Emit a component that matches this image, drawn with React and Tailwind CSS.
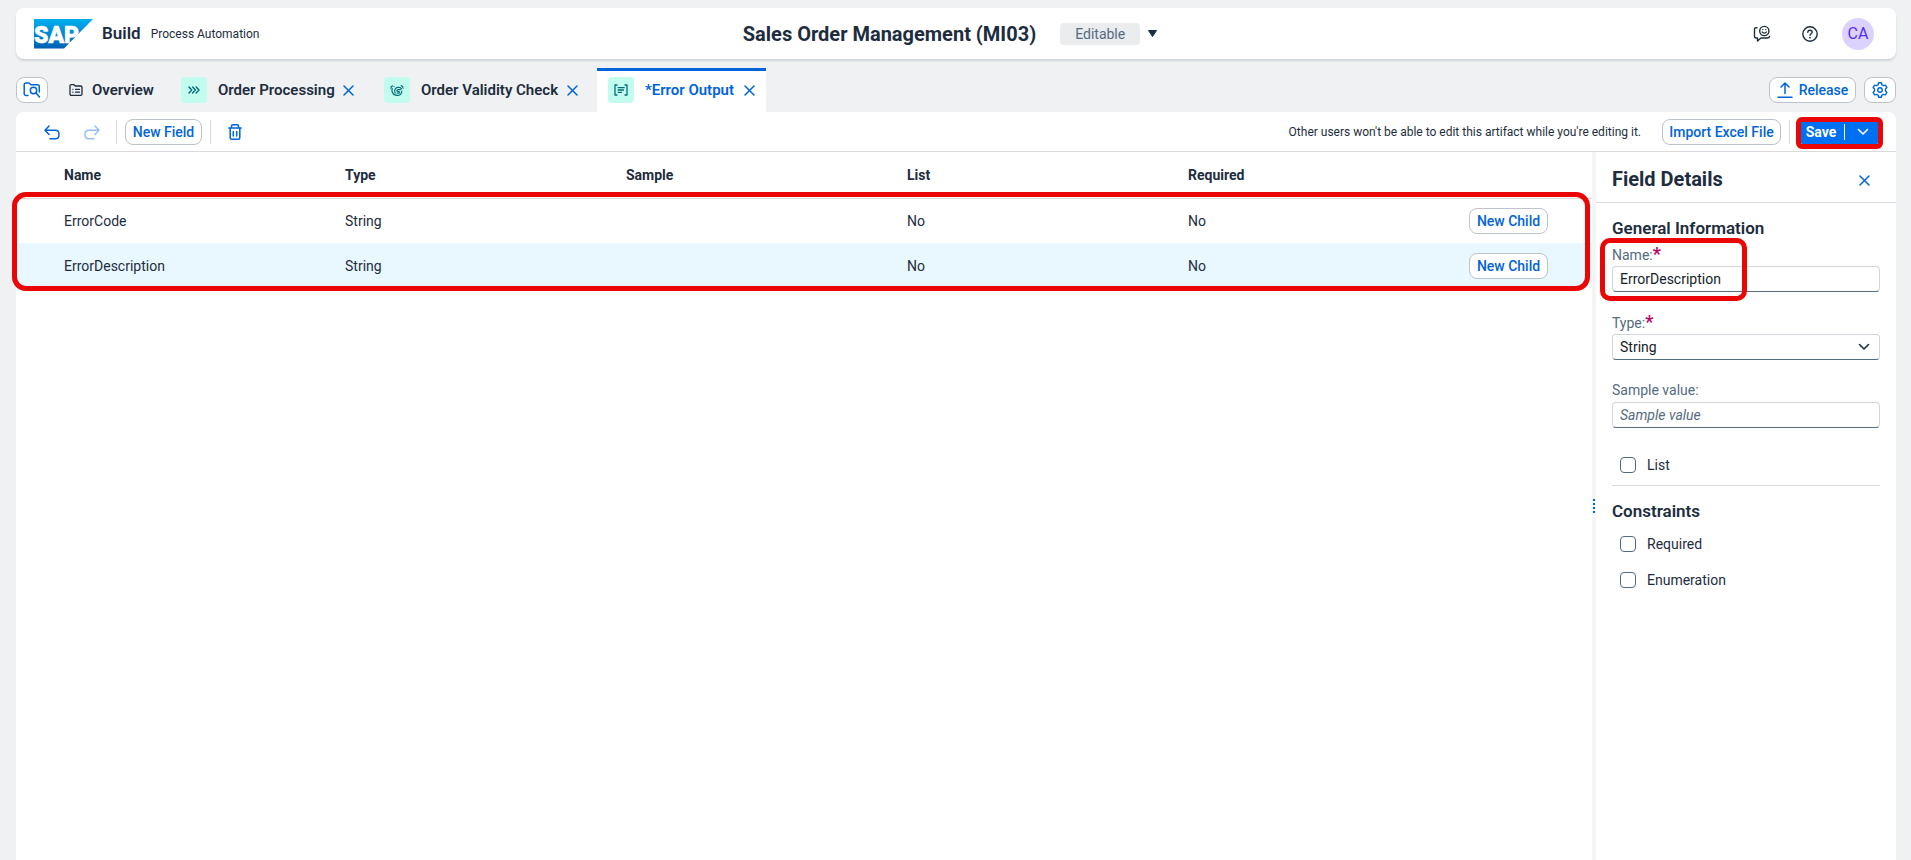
import React, { useState } from "react";

const ANNOTATION = "pointer-events-none absolute z-10 border-[5px] border-[#eb0606]";

function CloseIcon() {
  return (
    <svg width="11" height="11" viewBox="0 0 11 11" fill="none" stroke="#0064d9" strokeWidth="1.5" strokeLinecap="round" aria-hidden="true">
      <path d="M1 1l9 9M10 1l-9 9" />
    </svg>
  );
}

function ChevronIcon({ color }) {
  return (
    <svg width="12" height="12" viewBox="0 0 12 12" fill="none" stroke={color} strokeWidth="1.6" strokeLinecap="round" strokeLinejoin="round" aria-hidden="true">
      <path d="M1.5 3.500L6 8l4.500-4.500" />
    </svg>
  );
}

function SapLogo() {
  return (
    <svg width="59" height="30" viewBox="0 0 59 30" role="img" aria-label="SAP">
      <defs>
        <linearGradient id="sap" x1="0" y1="0" x2="0" y2="1">
          <stop offset="0" stopColor="#00aeef" />
          <stop offset="0.4" stopColor="#0091d8" />
          <stop offset="1" stopColor="#0060b4" />
        </linearGradient>
      </defs>
      <path d="M0 0H59L30 29.500H0Z" fill="url(#sap)" />
      <text x="0" y="23.500" fill="#fff" stroke="#fff" strokeWidth="0.6" fontFamily="Roboto, sans-serif" fontWeight="900" fontSize="23">SAP</text>
    </svg>
  );
}

function FolderSearchIcon() {
  return (
    <svg width="18" height="18" viewBox="0 0 18 18" fill="none" stroke="#0064d9" strokeWidth="1.5" strokeLinecap="round" strokeLinejoin="round" aria-hidden="true">
      <path d="M5 14.500H3a1.800 1.800 0 0 1-1.800-1.800V3.800C1.200 2.800 2 2 3 2h3l2 1.800h6.500c1 0 1.800.8 1.800 1.800V11" />
      <circle cx="10.500" cy="9.500" r="3.200" />
      <path d="M13 12l3.500 4" />
    </svg>
  );
}

function OverviewIcon() {
  return (
    <svg width="14" height="14" viewBox="0 0 14 14" fill="none" stroke="#1d2d3e" strokeWidth="1.300" strokeLinecap="round" strokeLinejoin="round" aria-hidden="true">
      <path d="M1 11V3c0-.8.500-1.300 1.300-1.300H5L6.300 3h5.400c.8 0 1.300.500 1.300 1.300V11c0 .8-.5 1.300-1.300 1.300H2.300C1.500 12.300 1 11.800 1 11z" />
      <path d="M3.800 6.300h.1M6.500 6.300h4M3.800 9.200h.1M6.500 9.200h4" />
    </svg>
  );
}

function ProcessIcon() {
  return (
    <svg width="12" height="8" viewBox="0 0 12 8" fill="none" stroke="#046c7a" strokeWidth="1.400" strokeLinecap="round" strokeLinejoin="round" aria-hidden="true">
      <path d="M1 1l2.800 3L1 7M4.600 1l2.800 3-2.800 3M8.200 1L11 4 8.200 7" />
    </svg>
  );
}

function DecisionIcon() {
  return (
    <svg width="14" height="14" viewBox="0 0 14 14" fill="none" stroke="#046c7a" strokeWidth="1.200" strokeLinecap="round" strokeLinejoin="round" aria-hidden="true">
      <path d="M2.200 5.500c-.9 3 .6 6.300 4.300 6.900 3.300.4 5.300-1.500 5.300-4.200" />
      <path d="M5.200 10C3.900 7.600 5 4.800 7.700 4.400c2.300-.3 3.400.6 3.700 1.600" />
      <path d="M10.300 6.700H8c-1.500 0-1.500 1.800 0 1.800h.8c1 0 .9 1.700-.3 1.700H7.200" />
      <path d="M.9 5.200c0-1.200.600-1.900 1.600-2.300M11.200 2.600c1.200.4 1.900 1.200 1.900 2.600M4 3.300h.1" />
    </svg>
  );
}

function DataTypeIcon() {
  return (
    <svg width="14" height="12" viewBox="0 0 14 12" fill="none" stroke="#046c7a" strokeWidth="1.300" strokeLinecap="round" strokeLinejoin="round" aria-hidden="true">
      <path d="M3 1H1v10h2M11 1h2v10h-2M4.200 3.700h6M4.200 6h5.300M4.200 8.300h3.300" />
    </svg>
  );
}

function FeedbackIcon() {
  return (
    <svg width="18" height="18" viewBox="0 0 18 18" fill="none" stroke="#1d2d3e" strokeWidth="1.400" strokeLinecap="round" strokeLinejoin="round" aria-hidden="true">
      <path d="M4 2.800H3C2 2.800 1.500 3.500 1.500 4.300v7.200c0 .9.600 1.500 1.500 1.500h1.500v3l3.500-3h6.500c1 0 1.800-.6 2-1.500" />
      <circle cx="11.300" cy="6" r="4.600" />
      <path d="M9.200 7c.9 1.500 3.300 1.500 4.200 0" />
      <path d="M9.800 4.600h.1M12.700 4.600h.1" />
    </svg>
  );
}

function HelpIcon() {
  return (
    <svg width="16" height="16" viewBox="0 0 16 16" fill="none" stroke="#1d2d3e" strokeWidth="1.400" strokeLinecap="round" strokeLinejoin="round" aria-hidden="true">
      <circle cx="8" cy="8" r="7.200" />
      <path d="M5.800 6.200C5.900 4.900 6.800 4.200 8 4.200s2.200.8 2.200 1.900c0 1.600-2.200 1.600-2.200 3.100" />
      <path d="M8 11.600v.1" strokeWidth="1.700" />
    </svg>
  );
}

function UploadIcon() {
  return (
    <svg width="16" height="16" viewBox="0 0 16 16" fill="none" stroke="#0064d9" strokeWidth="1.500" strokeLinecap="round" strokeLinejoin="round" aria-hidden="true">
      <path d="M1 15.200h14M8 11.500V1M4 5l4-4 4 4" />
    </svg>
  );
}

function GearIcon() {
  return (
    <svg width="16" height="16" viewBox="0 0 16 16" fill="none" stroke="#0064d9" strokeWidth="1.400" strokeLinejoin="round" aria-hidden="true">
      <path d="M6.600.8h2.800l.5 2 1.500.8 2-.5 1.500 2.500L13.500 7v2l1.400 1.400-1.500 2.500-2-.5-1.500.8-.5 2H6.600l-.5-2-1.500-.8-2 .5-1.500-2.500L2.500 9V7L1.100 5.600l1.500-2.500 2 .5 1.500-.8z" />
      <circle cx="8" cy="8" r="2.200" />
    </svg>
  );
}

function UndoIcon({ flipped }) {
  return (
    <svg width="16" height="15" viewBox="0 0 16 15" fill="none" stroke="#0064d9" strokeWidth="1.500" strokeLinecap="round" strokeLinejoin="round" aria-hidden="true">
      <path
        d={flipped
          ? "M11 1l4 4.200-4 4.200M15 5.200H4.500C2.500 5.200 1 6.800 1 9.400s1.500 4.300 3.500 4.300H10"
          : "M5 1L1 5.200l4 4.200M1 5.200h10.500c2 0 3.500 1.600 3.500 4.200s-1.500 4.300-3.500 4.300H6"}
      />
    </svg>
  );
}

function TrashIcon() {
  return (
    <svg width="14" height="16" viewBox="0 0 14 16" fill="none" stroke="#0064d9" strokeWidth="1.500" strokeLinecap="round" strokeLinejoin="round" aria-hidden="true">
      <path d="M.8 4h12.400M3.500 4V2c0-.7.500-1.200 1.200-1.200h4.600c.7 0 1.200.5 1.200 1.200v2M2.200 4v9.700c0 .9.600 1.500 1.500 1.500h6.600c.9 0 1.500-.6 1.500-1.500V4M5.300 7.500v4.500M8.700 7.500v4.500" />
    </svg>
  );
}

function OutlineButton({ children, label, className }) {
  return (
    <button type="button" aria-label={label} className={`flex h-[26px] shrink-0 items-center justify-center whitespace-nowrap rounded-lg border border-[#bcc3ca] bg-white text-sm font-medium text-[#0064d9] ${className}`}>
      {children}
    </button>
  );
}

function Separator() {
  return <div className="h-6 w-px shrink-0 bg-[#d9d9d9]" />;
}

function Tab({ icon, title, active, className }) {
  return (
    <div className={`flex items-center justify-between px-[11px] ${active ? "border-t-[3px] border-[#0064d9] bg-white pb-[3px]" : ""} ${className}`}>
      <a href="#" className={`flex items-center gap-[11px] whitespace-nowrap text-[15px] font-semibold ${active ? "text-[#0064d9]" : "text-[#1d2d3e]"}`}>
        <span className="flex size-[26px] items-center justify-center rounded bg-[#c2fcee]">{icon}</span>
        {title}
      </a>
      <button type="button" aria-label={`Close ${title}`}><CloseIcon /></button>
    </div>
  );
}

function FieldLabel({ htmlFor, required, children }) {
  return (
    <label htmlFor={htmlFor} className="block h-[22px] whitespace-nowrap text-sm leading-5 text-[#556b82]">
      {children}:{required && <span className="text-lg font-bold leading-5 text-[#ba066c]">*</span>}
    </label>
  );
}

const INPUT = "block h-[26px] w-full rounded border border-[#d0d6dc] border-b-[#556b82] bg-white px-[7px] text-sm text-[#131e29] outline-none";

function CheckField({ id, label, className }) {
  return (
    <div className={`flex items-center gap-[11px] pl-2 ${className}`}>
      <input id={id} type="checkbox" className="size-4 appearance-none rounded border border-[#556b82] bg-white checked:bg-[#0064d9]" />
      <label htmlFor={id} className="text-sm leading-5 text-[#1d2d3e]">{label}</label>
    </div>
  );
}

const ROWS = [
  { name: "ErrorCode", type: "String", sample: "", list: "No", required: "No" },
  { name: "ErrorDescription", type: "String", sample: "", list: "No", required: "No", selected: true },
];

function FieldTable() {
  return (
    <div className="relative min-w-0 flex-1">
      <table className="w-full table-fixed border-collapse text-left text-sm text-[#1d2d3e]">
        <colgroup>
          <col className="w-12" />
          <col />
          <col />
          <col />
          <col />
          <col />
          <col className="w-[123px]" />
        </colgroup>
        <thead>
          <tr className="h-[46px] border-b border-[#d9d9d9]">
            <td />
            <th className="font-bold">Name</th>
            <th className="font-bold">Type</th>
            <th className="font-bold">Sample</th>
            <th className="font-bold">List</th>
            <th className="font-bold">Required</th>
            <td />
          </tr>
        </thead>
        <tbody>
          {ROWS.map((row) => (
            <tr key={row.name} className={`h-[45px] ${row.selected ? "bg-[#e9f7ff]" : ""}`}>
              <td />
              <td>{row.name}</td>
              <td>{row.type}</td>
              <td>{row.sample}</td>
              <td>{row.list}</td>
              <td>{row.required}</td>
              <td><OutlineButton className="w-[79px]">New Child</OutlineButton></td>
            </tr>
          ))}
        </tbody>
      </table>
      <div className={`${ANNOTATION} -left-1 right-0.5 top-10 h-[99px] rounded-[14px]`} />
    </div>
  );
}

function DetailsPanel() {
  const [name, setName] = useState("ErrorDescription");
  return (
    <aside className="w-[300px] shrink-0 text-[#1d2d3e]">
      <div className="flex h-[51px] items-center justify-between border-b border-[#d9d9d9] pl-4 pr-[26px] pt-1">
        <h2 className="text-xl font-bold">Field Details</h2>
        <button type="button" aria-label="Close details" className="pt-0.5"><CloseIcon /></button>
      </div>
      <div className="px-4 pt-[13px]">
        <h3 className="text-[17px] font-semibold leading-6">General Information</h3>
        <div className="relative pt-1">
          <FieldLabel htmlFor="name" required>Name</FieldLabel>
          <input id="name" className={INPUT} value={name} onChange={(e) => setName(e.target.value)} />
          <div className={`${ANNOTATION} -left-3 -top-0.5 h-[63px] w-[147px] rounded-[10px]`} />
        </div>
        <div className="pt-5">
          <FieldLabel htmlFor="type" required>Type</FieldLabel>
          <div className="relative">
            <select id="type" className={`${INPUT} appearance-none`} defaultValue="String">
              <option>String</option>
              <option>Number</option>
              <option>Boolean</option>
            </select>
            <span className="pointer-events-none absolute inset-y-0 right-2.5 flex items-center"><ChevronIcon color="#1d2d3e" /></span>
          </div>
        </div>
        <div className="pt-5">
          <FieldLabel htmlFor="sample">Sample value</FieldLabel>
          <input id="sample" placeholder="Sample value" className={`${INPUT} placeholder:italic placeholder:text-[#556b82]`} />
        </div>
        <CheckField id="list" label="List" className="pb-2.5 pt-[27px]" />
        <div className="border-t border-[#d9d9d9] pt-[13px]">
          <h3 className="text-[17px] font-semibold leading-6">Constraints</h3>
          <CheckField id="required" label="Required" className="pt-[11px]" />
          <CheckField id="enumeration" label="Enumeration" className="pt-4" />
        </div>
      </div>
    </aside>
  );
}

export default function App() {
  return (
    <div className="flex min-h-screen flex-col bg-[#eff1f2] pl-4 pr-[15px] pt-2 font-['Roboto','Liberation_Sans',sans-serif] text-[#1d2d3e]">
      <header className="grid h-[51px] shrink-0 grid-cols-[1fr_auto_1fr] items-center rounded-lg bg-white pl-[18px] pr-[22px] shadow-[0_2px_2px_#cfd5d8]">
        <div className="flex items-center">
          <SapLogo />
          <span className="ml-[9px] text-[17px] font-semibold">Build</span>
          <span className="ml-2.5 text-xs">Process Automation</span>
        </div>
        <div className="flex items-center">
          <h1 className="text-xl font-bold">Sales Order Management (MI03)</h1>
          <span className="ml-6 flex h-[22px] w-20 items-center justify-center rounded bg-[#eaecee] text-sm text-[#556b82]">Editable</span>
          <button type="button" aria-label="Select version" className="ml-2 pr-2">
            <svg width="9" height="7" viewBox="0 0 9 7" aria-hidden="true"><path d="M.5.500h8L4.500 6.500z" fill="#1d2d3e" stroke="#1d2d3e" strokeLinejoin="round" /></svg>
          </button>
        </div>
        <div className="flex items-center justify-end">
          <button type="button" aria-label="Feedback"><FeedbackIcon /></button>
          <button type="button" aria-label="Help" className="ml-[31px]"><HelpIcon /></button>
          <button type="button" aria-label="Account" className="ml-6 size-8 rounded-full bg-[#dcd2ff] text-base text-[#552cff]">CA</button>
        </div>
      </header>

      <nav className="flex h-[53px] shrink-0 items-stretch pt-[9px]">
        <div className="flex items-center"><OutlineButton label="Browse project" className="w-8"><FolderSearchIcon /></OutlineButton></div>
        <a href="#" className="ml-[21px] flex w-[101px] items-center gap-[9px] text-[15px] font-semibold"><OverviewIcon />Overview</a>
        <Tab icon={<ProcessIcon />} title="Order Processing" className="w-[195px]" />
        <Tab icon={<DecisionIcon />} title="Order Validity Check" className="ml-2 w-[216px]" />
        <Tab icon={<DataTypeIcon />} title="*Error Output" active className="ml-2 w-[169px]" />
        <div className="ml-auto flex items-center gap-2">
          <OutlineButton className="w-[87px] gap-1.5"><UploadIcon />Release</OutlineButton>
          <OutlineButton label="Settings" className="w-8"><GearIcon /></OutlineButton>
        </div>
      </nav>

      <main className="flex flex-1 flex-col rounded-t-lg bg-white">
        <div className="flex h-10 shrink-0 items-center border-b border-[#d9d9d9] pl-7 pr-[15px] pt-px">
          <button type="button" aria-label="Undo"><UndoIcon /></button>
          <button type="button" aria-label="Redo" disabled className="ml-6 opacity-40"><UndoIcon flipped /></button>
          <div className="ml-4 flex items-center gap-2">
            <Separator />
            <OutlineButton className="w-[77px]">New Field</OutlineButton>
            <Separator />
          </div>
          <button type="button" aria-label="Delete" className="ml-[17px]"><TrashIcon /></button>
          <p className="ml-auto mr-[21px] text-xs">Other users won't be able to edit this artifact while you're editing it.</p>
          <div className="flex items-center gap-2">
            <OutlineButton className="w-[119px]">Import Excel File</OutlineButton>
            <Separator />
          </div>
          <div className="relative ml-2 flex h-[26px] items-center rounded-lg bg-[#0070f2] text-sm font-bold text-white">
            <button type="button" className="h-full w-[46px]">Save</button>
            <div className="h-4 w-px bg-white" />
            <button type="button" aria-label="More save options" className="flex h-full w-9 items-center justify-center"><ChevronIcon color="#fff" /></button>
            <div className={`${ANNOTATION} -inset-x-0.5 -bottom-1 -top-0.5 rounded-md`} />
          </div>
        </div>

        <div className="flex flex-1">
          <FieldTable />
          <div className="flex w-1 shrink-0 flex-col items-center justify-center gap-0.5 bg-[#f4f5f7]" role="separator" aria-orientation="vertical">
            <span className="size-0.5 bg-[#0064d9]" />
            <span className="size-0.5 bg-[#0064d9]" />
            <span className="size-0.5 bg-[#0064d9]" />
            <span className="size-0.5 bg-[#0064d9]" />
          </div>
          <DetailsPanel />
        </div>
      </main>
    </div>
  );
}
